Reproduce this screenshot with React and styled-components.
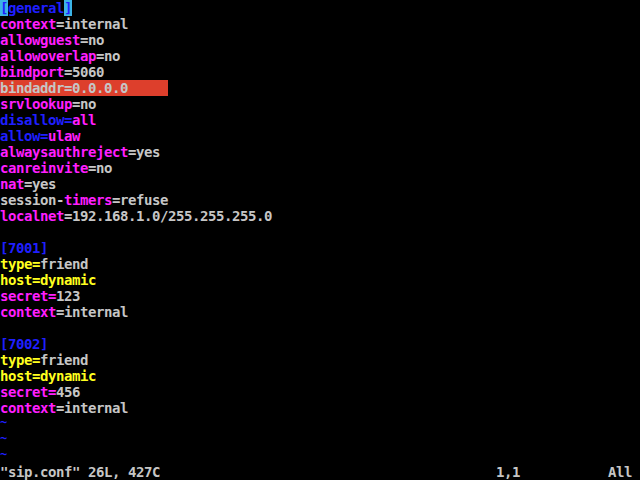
import React from 'react';
import styled, { createGlobalStyle } from 'styled-components';

const Global = createGlobalStyle`
  html, body {
    margin: 0;
    padding: 0;
    background: #000;
  }
`;

const colors = {
  text: '#c6c6c6',
  mag: '#ff1fff',
  blue: '#1f1fff',
  yellow: '#ffff1f',
  red: '#dd3f2c',
  cyan: '#3cb4e6',
};

const Screen = styled.div`
  width: 640px;
  height: 480px;
  background: #000;
  display: flex;
  flex-direction: column;
  font-family: "DejaVu Sans Mono", "Liberation Mono", monospace;
  font-size: 14px;
  letter-spacing: -0.43px;
  font-weight: bold;
  color: ${colors.text};
  overflow: hidden;
`;

const Line = styled.div`
  height: 16px;
  line-height: 16px;
  white-space: pre;
  display: flex;
`;

const Text = styled.span`
  color: ${(p) => colors[p.c] || colors.text};
  background: ${(p) => (p.bg ? colors[p.bg] : 'transparent')};
`;

const Tilde = styled.span`
  color: ${colors.blue};
  font-size: 12px;
  line-height: 12px;
  height: 16px;
`;

const Status = styled.div`
  height: 16px;
  line-height: 16px;
  white-space: pre;
  display: grid;
  grid-template-columns: 496px 112px 1fr;
  margin-top: auto;
`;

// each line is a list of [text, colour, background]
const lines = [
  [['[', 'blue', 'cyan'], ['general', 'blue'], [']', 'blue', 'cyan']],
  [['context', 'mag'], ['=internal']],
  [['allowguest', 'mag'], ['=no']],
  [['allowoverlap', 'mag'], ['=no']],
  [['bindport', 'mag'], ['=5060']],
  [['bindaddr=0.0.0.0     ', 'text', 'red']],
  [['srvlookup', 'mag'], ['=no']],
  [['disallow=', 'blue'], ['all', 'mag']],
  [['allow=', 'blue'], ['ulaw', 'mag']],
  [['alwaysauthreject', 'mag'], ['=yes']],
  [['canreinvite', 'mag'], ['=no']],
  [['nat', 'mag'], ['=yes']],
  [['session-'], ['timers', 'mag'], ['=refuse']],
  [['localnet', 'mag'], ['=192.168.1.0/255.255.255.0']],
  [],
  [['[7001]', 'blue']],
  [['type=', 'yellow'], ['friend']],
  [['host=dynamic', 'yellow']],
  [['secret=', 'mag'], ['123']],
  [['context', 'mag'], ['=internal']],
  [],
  [['[7002]', 'blue']],
  [['type=', 'yellow'], ['friend']],
  [['host=dynamic', 'yellow']],
  [['secret=', 'mag'], ['456']],
  [['context', 'mag'], ['=internal']],
];

export default function App() {
  return (
    <Screen>
      <Global />
      {lines.map((parts, i) => (
        <Line key={i}>
          {parts.map(([t, c, bg], j) => (
            <Text key={j} c={c} bg={bg}>{t}</Text>
          ))}
        </Line>
      ))}
      {[0, 1, 2].map((i) => (
        <Line key={'t' + i}><Tilde>~</Tilde></Line>
      ))}
      <Status>
        <span>"sip.conf" 26L, 427C</span>
        <span>1,1</span>
        <span>All</span>
      </Status>
    </Screen>
  );
}
